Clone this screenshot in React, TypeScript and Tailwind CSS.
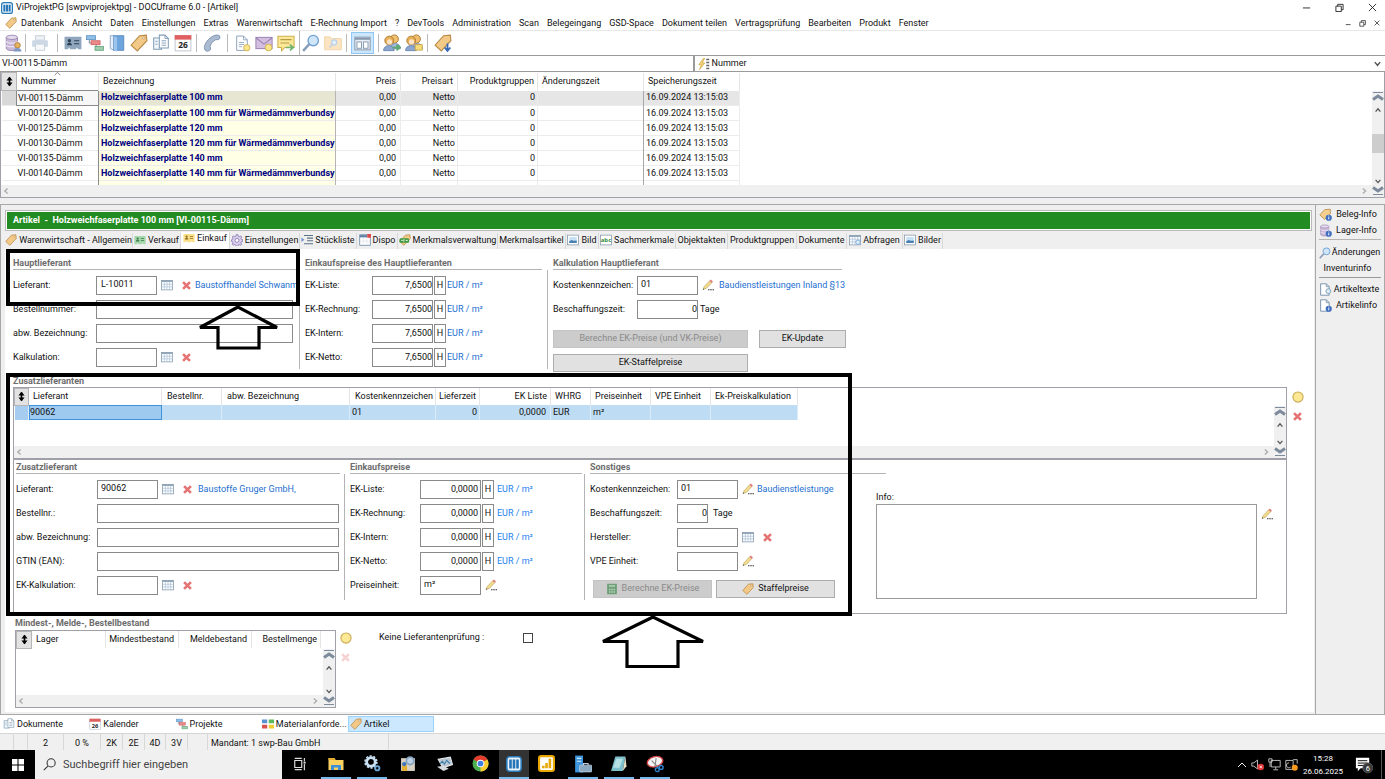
import React, { useId } from 'react';

type Kids = { children?: React.ReactNode };

/* ---------- Icons ---------- */

const Svg = ({ size = 16, box = 16, children }: Kids & { size?: number; box?: number }) => (
  <svg width={size} height={size} viewBox={`0 0 ${box} ${box}`} fill="none" className="shrink-0" aria-hidden="true">
    {children}
  </svg>
);

const tagShape = 'M8.5 1.5 14.5 1 15 6 6.5 15 1 10z';

const TagIcon = ({ size = 16 }: { size?: number }) => (
  <Svg size={size}>
    <path d={tagShape} fill="#f3c988" stroke="#b98a45" />
    <circle cx="12.3" cy="3.6" r="1.1" fill="#fff" stroke="#b98a45" strokeWidth=".6" />
  </Svg>
);

const TagDownIcon = ({ size = 16 }: { size?: number }) => (
  <Svg size={size}>
    <path d={tagShape} fill="#f3c988" stroke="#b98a45" />
    <path d="M12 8.5v6m-2.5-2.5 2.5 3 2.5-3" stroke="#3567b5" strokeWidth="1.6" />
  </Svg>
);

const TagAbcIcon = ({ size = 16 }: { size?: number }) => (
  <Svg size={size}>
    <path d={tagShape} fill="#f3c988" stroke="#b98a45" />
    <rect x=".5" y="5.5" width="13" height="6" rx="2" fill="#3e9a3e" />
    <path d="M3 8.5h2M6.5 7v3M9 8.5h2.500" stroke="#fff" strokeWidth="1.3" />
  </Svg>
);

const InfoDot = () => (
  <>
    <circle cx="12" cy="12" r="3.8" fill="#3f6fc0" />
    <path d="M12 11.3v2.600M12 9.300v1.100" stroke="#fff" strokeWidth="1.2" />
  </>
);

const TagInfoIcon = () => (
  <Svg size={13}>
    <path d="M7 2 14 1.500V7L7 14 1 8.500z" fill="#f4cf8d" stroke="#b98a45" />
    <InfoDot />
  </Svg>
);

const DbShape = () => (
  <>
    <path d="M2 3v9.500c0 3 10 3 10 0V3z" fill="#c9b8d8" stroke="#9a86b2" strokeWidth=".8" />
    <ellipse cx="7" cy="3" rx="5" ry="1.900" fill="#e4daee" stroke="#9a86b2" strokeWidth=".8" />
    <path d="M2 6.500c0 2.200 10 2.200 10 0M2 9.700c0 2.200 10 2.200 10 0" stroke="#f1e9f7" />
  </>
);

const DbInfoIcon = () => (
  <Svg size={13}>
    <DbShape />
    <InfoDot />
  </Svg>
);

const DbUserIcon = () => (
  <Svg size={18}>
    <DbShape />
    <circle cx="12" cy="10" r="2.500" fill="#e6b45c" stroke="#9b6a2d" strokeWidth=".6" />
    <path d="M8.500 15.500c0-4 7-4 7 0z" fill="#7f98c4" />
  </Svg>
);

const PrinterIcon = () => (
  <Svg size={18}>
    <rect x="4" y="1.500" width="8" height="4" fill="#eef1f5" stroke="#ccd5e0" />
    <rect x="1" y="5.500" width="14" height="6" rx="1" fill="#ccd8e6" />
    <rect x="4" y="9" width="8" height="5.500" fill="#f6f8fa" stroke="#ccd5e0" />
  </Svg>
);

const CardIcon = ({ size = 18, fill = '#8fa6bd', ink = '#2d4156' }: { size?: number; fill?: string; ink?: string }) => (
  <Svg size={size}>
    <path d="M.5 2.500h15v11h-3l-1-1.500-1 1.500h-5l-1-1.500-1 1.500h-3z" fill={fill} />
    <circle cx="4.800" cy="6" r="1.500" fill={ink} />
    <path d="M2.500 10c0-3 4.600-3 4.600 0z" fill={ink} />
    <path d="M9 6h4.500M9 8.700h4.500" stroke={ink} />
  </Svg>
);

const GanttIcon = ({ size = 18 }: { size?: number }) => (
  <Svg size={size}>
    <path d="M3 5v3h3M9 9v3.500h2" stroke="#8b97a5" />
    <rect x=".5" y="1.500" width="8" height="3.500" fill="#8fc0e8" stroke="#5b8fbd" strokeWidth=".7" />
    <rect x="4.500" y="6" width="8" height="3.500" fill="#ea8a8a" stroke="#cc5a5a" strokeWidth=".7" />
    <rect x="8" y="11" width="7.500" height="3.500" fill="#9fcfae" stroke="#5f9f78" strokeWidth=".7" />
  </Svg>
);

const BookIcon = () => (
  <Svg size={18}>
    <path d="M2 1.500h3.500v13L2 13z" fill="#e5edf6" stroke="#6c8db5" strokeWidth=".6" />
    <path d="M5 1.500h9v13H5z" fill="#6fa5dd" stroke="#4d80b8" strokeWidth=".7" />
    <path d="M5 1.500 8 3v12.500l-3-1z" fill="#9cc4ec" />
  </Svg>
);

const DocsIcon = ({ size = 18 }: { size?: number }) => (
  <Svg size={size}>
    <path d="M1.500 3.500h7v10h-7z" fill="#f2f7fb" stroke="#7f9bb5" strokeWidth=".9" />
    <path d="M6.500 1h5L14.500 4v8.500h-8z" fill="#fff" stroke="#7f9bb5" strokeWidth=".9" />
    <path d="M11.500 1v3h3M8.500 6h4M8.500 8h4M8.500 10h4M3 6.500h2M3 9h2" stroke="#7f9bb5" strokeWidth=".8" />
  </Svg>
);

const CalendarIcon = ({ size = 18 }: { size?: number }) => (
  <Svg size={size}>
    <rect x="1" y="1.500" width="14" height="13.500" fill="#fff" stroke="#b9c2cc" strokeWidth=".8" />
    <rect x=".6" y="1" width="14.800" height="4" fill="#e06060" />
    <text x="8" y="12.800" textAnchor="middle" fontSize="7.500" fontWeight="700" fill="#222" fontFamily="Open Sans, sans-serif">
      26
    </text>
  </Svg>
);

const PhoneIcon = () => (
  <Svg size={18}>
    <path
      d="M10.500 1.200c1-.6 3.800-.3 4.500.8.300 1-.2 2.600-1 2.900l-2.800.2C9 6.200 6.800 8.800 6.300 11l.5 2.600c-.4 1.200-2.600 1.900-3.900 1.600C1.500 14.500 1 12.500 1.300 10.800 2.500 6.500 6.500 2.500 10.500 1.200z"
      fill="#a9bad1"
      stroke="#7088a8"
      strokeWidth=".7"
    />
  </Svg>
);

const YellowDot = () => <circle cx="12" cy="12" r="3" fill="#fbe58b" stroke="#cfae4b" strokeWidth=".8" />;

const DocNewIcon = () => (
  <Svg size={17}>
    <path d="M2.500 1H9l3.500 3.500V14.500h-10z" fill="#fff" stroke="#8aa1b8" strokeWidth=".9" />
    <path d="M9 1v3.500h3.500M4.500 7h5M4.500 9h5M4.500 11h3" stroke="#8aa1b8" strokeWidth=".8" />
    <YellowDot />
  </Svg>
);

const MailIcon = () => (
  <Svg size={18}>
    <rect x=".8" y="3" width="14.400" height="10" fill="#d3bfe0" stroke="#9c83b3" strokeWidth=".9" />
    <path d="m1 3.500 7 5.500 7-5.500" stroke="#9c83b3" />
    <YellowDot />
  </Svg>
);

const NoteIcon = () => (
  <Svg size={18}>
    <path d="M.8 2h14.400v10H7l-3 3v-3H.8z" fill="#fbe898" stroke="#cdb04e" strokeWidth=".9" />
    <path d="M3 5h10M3 8h8" stroke="#b69b44" />
    <path d="M8 12h6m-2.500-2.500L14.500 12l-3 2.500" stroke="#6fb36f" strokeWidth="1.500" />
  </Svg>
);

const SearchIcon = ({ size = 18 }: { size?: number }) => (
  <Svg size={size}>
    <path d="M1 15 6.500 9" stroke="#8b9cb8" strokeWidth="2.200" />
    <circle cx="10" cy="5.800" r="4.600" fill="#cfe6fa" stroke="#6f9fd0" strokeWidth="1.200" />
  </Svg>
);

const FolderIcon = () => (
  <Svg size={18}>
    <path d="M.5 2.500h5l1 1.500h9v10H.5z" fill="#fae4c2" stroke="#f0d3a5" strokeWidth=".7" />
    <path d="m5 12 2.500-3" stroke="#c8d0dd" strokeWidth="1.400" />
    <circle cx="9" cy="7.500" r="2.300" fill="#e3effa" stroke="#b9d0e8" />
  </Svg>
);

const LayoutIcon = () => (
  <Svg size={17}>
    <rect x=".8" y="2" width="14.400" height="12" fill="#e9eff5" stroke="#8699ae" strokeWidth=".9" />
    <path d="M1 3.500h14" stroke="#8699ae" strokeWidth="2" />
    <rect x="2.800" y="6.500" width="4.200" height="6" fill="#fff" stroke="#8699ae" strokeWidth=".9" />
    <rect x="9" y="6.500" width="4.200" height="6" fill="#fff" stroke="#8699ae" strokeWidth=".9" />
  </Svg>
);

const PeopleIcon = ({ folder = false }: { folder?: boolean }) => (
  <Svg size={18}>
    <circle cx="10" cy="4.500" r="3.700" fill="#f0c070" stroke="#a9762f" strokeWidth=".8" />
    <path d="M6.500 13c0-6 9-6 9 0z" fill="#a5bbde" stroke="#6580ab" strokeWidth=".6" />
    <circle cx="5.500" cy="5.800" r="3.900" fill="#e8b158" stroke="#a9762f" strokeWidth=".8" />
    <circle cx="5.800" cy="7" r="2.300" fill="#fbe3c4" />
    <path d="M.5 14.800c0-6 9.500-6 9.500 0z" fill="#8ba6cf" stroke="#6580ab" strokeWidth=".7" />
    {folder ? (
      <rect x="9" y="9.500" width="6.300" height="4.800" fill="#f7dc7c" stroke="#c49d3b" strokeWidth=".7" />
    ) : (
      <path d="M8.500 12h6M12 9.500l3 2.500-3 2.500" stroke="#5fa873" strokeWidth="1.600" />
    )}
  </Svg>
);

const GearIcon = ({ size = 12 }: { size?: number }) => (
  <Svg size={size}>
    <path
      d="M7 .8h2l.5 2 1.500.7 1.900-1 1.400 1.500-1 1.800.6 1.500 2 .5v2l-2 .5-.7 1.500 1 1.900-1.400 1.300-1.800-1-1.500.7-.5 2H7l-.5-2-1.500-.7-1.900 1-1.400-1.400 1-1.800-.7-1.500-1.500-.5v-2l1.500-.5.7-1.500-1-1.800 1.400-1.500 1.900 1 1.500-.7z"
      fill="#d8cdea"
      stroke="#806db0"
    />
    <circle cx="8" cy="8.500" r="2.600" fill="#fff" stroke="#806db0" />
  </Svg>
);

const ListIcon = () => (
  <Svg size={12}>
    <path d="M4 2h12M8 5.500h8M8 9h8M4 13h12" stroke="#5d7288" strokeWidth="1.400" />
    <path d="M.5 4.500 4.500 7.500l-4 3z" fill="#7390c8" />
  </Svg>
);

const DispoIcon = () => (
  <Svg size={12}>
    <rect x="1" y="1" width="14" height="14" fill="#fff" stroke="#5e7fa3" />
    <path d="M1 3h10" stroke="#5e7fa3" strokeWidth="3" />
    <rect x="11" y="0" width="5" height="5" fill="#e24848" />
    <path d="M5.500 5v9M10.500 5v9M2 9.500h12" stroke="#dfe6ee" />
  </Svg>
);

const PictureIcon = () => (
  <Svg size={12}>
    <rect x=".7" y="1.500" width="14.600" height="13" fill="#fff" stroke="#8496a8" />
    <rect x="3" y="4" width="10" height="8" fill="#c6e1f6" />
    <path d="M3 12V9.500l3-1.500 3 1 4-.5V12z" fill="#4a7fb0" />
  </Svg>
);

const AbcIcon = () => (
  <Svg size={12}>
    <rect x=".7" y="1.500" width="14.600" height="13" fill="#fff" stroke="#8496a8" />
    <text x="8" y="11" textAnchor="middle" fontSize="8" fontWeight="700" fill="#2f8a3c" fontFamily="Open Sans, sans-serif">
      abc
    </text>
  </Svg>
);

const GridIcon = ({ search = false }: { search?: boolean }) => (
  <Svg size={12}>
    <rect x=".7" y="2" width="14.600" height="12.500" fill="#fff" stroke="#7d95ab" />
    <path d="M1 3h14" stroke="#7d95ab" strokeWidth="1.500" />
    <path d="M1 7h14M1 10.500h14M4.500 4v10M8 4v10M11.500 4v10" stroke="#adc3d8" />
    {search && <circle cx="12" cy="11" r="3" fill="#dcecfa" stroke="#6f9fd0" />}
  </Svg>
);

const CrossIcon = ({ faded = false }: { faded?: boolean }) => (
  <Svg size={11}>
    <path d="m3 3 10 10M13 3 3 13" stroke={faded ? '#f6d2d2' : '#e57373'} strokeWidth="3.800" />
  </Svg>
);

const PencilIcon = () => (
  <Svg size={12}>
    <path d="M1.500 13.500 3 10l7.500-8 2.800 2.600-7.600 8z" fill="#f3dc8c" stroke="#b39a54" strokeWidth=".8" />
    <path d="M10 2.500 11.800.8l2.800 2.500-1.800 1.900z" fill="#e07f7f" />
    <path d="m1 14.500.8-2 1.200 1.200z" fill="#333" />
    <path d="M8 14.200h8" stroke="#333" strokeWidth="1.400" strokeDasharray="2 1" />
  </Svg>
);

const CircleIcon = () => (
  <Svg size={12}>
    <circle cx="8" cy="8" r="6.800" fill="#fde995" stroke="#c8a850" strokeWidth="1.400" />
  </Svg>
);

const DocSideIcon = ({ info = false }: { info?: boolean }) => (
  <Svg size={13}>
    <path d="M2 1h7l3.500 3.500V15H2z" fill="#fff" stroke="#7893ad" strokeWidth="1.200" />
    <path d="M9 1v3.500h3.500" stroke="#7893ad" />
    {info ? <InfoDot /> : <circle cx="11.500" cy="10" r="3" fill="#d9ecf7" stroke="#7893ad" />}
  </Svg>
);

const CalcIcon = () => (
  <Svg size={12}>
    <rect x="1.500" y="1" width="13" height="14" fill="#6f9f78" />
    <path d="M4 4h8" stroke="#b9d2bd" strokeWidth="2" />
    <path d="M4 8.500h8M4 12h8" stroke="#b9d2bd" strokeWidth="2" strokeDasharray="2 1" />
  </Svg>
);

const BlocksIcon = () => (
  <Svg size={12}>
    <rect x="0" y="2" width="7" height="5" fill="#5a8fd0" />
    <rect x="9" y="2" width="7" height="5" fill="#5cb85c" />
    <rect x="0" y="9" width="7" height="5" fill="#d85050" />
    <rect x="9" y="9" width="7" height="5" fill="#f0d030" />
  </Svg>
);

const BoltIcon = () => (
  <Svg size={12}>
    <path d="M7 .5 1 9h3.500L2 15.500 9 6.500H5.500L9 .5z" fill="#f7d774" stroke="#c09a35" strokeWidth=".8" />
    <path d="M11 2h4M11 6h4M11 10h4M11 14h4" stroke="#666" strokeWidth="2" />
  </Svg>
);

const AppIcon = ({ size = 12 }: { size?: number }) => (
  <Svg size={size}>
    <rect x=".8" y=".8" width="14.400" height="14.400" rx="3" fill="#e8f3fb" stroke="#2a7ab8" strokeWidth="1.600" />
    <path d="M4.500 3.500v9M8 3.500v9M11.500 3.500v9" stroke="#2474b5" strokeWidth="2.600" />
  </Svg>
);

const UpDownIcon = () => (
  <Svg size={11}>
    <path d="M8 2v12" stroke="#000" strokeWidth="2.400" />
    <path d="M3.500 6.500h9L8 1zM3.500 9.500h9L8 15z" fill="#000" />
  </Svg>
);

const Chevron = ({ d, color = '#555', size = 8 }: { d: 'up' | 'down' | 'left' | 'right'; color?: string; size?: number }) => {
  const paths = { up: 'M2 7l3-3.500L8 7', down: 'M2 3.500 5 7l3-3.500', left: 'M7 2 3.500 5 7 8', right: 'M3.500 2 7 5 3.500 8' };
  return (
    <Svg size={size} box={10}>
      <path d={paths[d]} stroke={color} strokeWidth="1.600" />
    </Svg>
  );
};

const JumpIcon = ({ down = false }: { down?: boolean }) => (
  <svg width="12" height="11" viewBox="0 0 12 11" fill="none" className="shrink-0" aria-hidden="true">
    <g transform={down ? 'rotate(180 6 5.500)' : undefined}>
      <path d="M1 1.500h10" stroke="#7d8b9c" />
      <path d="M1 8.500 6 5l5 3.500" stroke="#7d8b9c" strokeWidth="3" />
    </g>
  </svg>
);

/* ---------- Shared pieces ---------- */

const VScroll = ({ thumb = false }: { thumb?: boolean }) => (
  <div className="flex w-3 flex-1 flex-col items-center bg-[#f0f0f0]">
    <JumpIcon />
    <div className="h-1" />
    <Chevron d="up" />
    {thumb && <div className="mt-5 h-[19px] w-full bg-[#cdcdcd]" />}
    <div className="flex-1" />
    <Chevron d="down" />
  </div>
);

const HScroll = () => (
  <div className="flex h-3 items-center bg-[#f0f0f0] pl-px">
    <Chevron d="left" color="#aaa" />
    <div className="flex-1" />
    <Chevron d="right" color="#aaa" />
    <div className="ml-1 flex w-3 justify-center">
      <JumpIcon down />
    </div>
  </div>
);

const HandleCell = () => (
  <th className="border border-[#b5b5b5] bg-[#e3e3e3] p-0">
    <div className="flex justify-center">
      <UpDownIcon />
    </div>
  </th>
);

const Section = ({ title, className, children }: Kids & { title: string; className: string }) => (
  <section className={`shrink-0 ${className}`}>
    <h2 className="h-3 border-b border-[#b4b4b4] font-bold text-[#6d6d6d]">{title}</h2>
    <div className="flex flex-col gap-[5px] pt-1.5">{children}</div>
  </section>
);

const Divider = ({ className = '' }: { className?: string }) => (
  <div className={`ml-0.5 mr-[5px] mt-3 w-px shrink-0 bg-[#b4b4b4] ${className}`} />
);

type FieldProps = Kids & {
  label: string;
  labelClass?: string;
  inputClass?: string;
  value?: string;
};

const Field = ({ label, labelClass = 'w-[83px]', inputClass = 'w-[61px]', value = '', children }: FieldProps) => {
  const id = useId();
  return (
    <div className="flex h-[19px] items-center">
      <label htmlFor={id} className={`shrink-0 ${labelClass}`}>
        {label}
      </label>
      <input
        id={id}
        defaultValue={value}
        className={`h-[19px] shrink-0 border border-[#8a8a8a] bg-white outline-none ${inputClass}`}
      />
      {children}
    </div>
  );
};

const PriceField = ({ label, value, labelClass, inputClass, unitClass }: {
  label: string;
  value: string;
  labelClass: string;
  inputClass: string;
  unitClass: string;
}) => (
  <Field label={label} labelClass={labelClass} inputClass={inputClass} value={value}>
    <button className="ml-px h-[19px] w-3 shrink-0 border border-[#8a8a8a] bg-white">H</button>
    <span className={unitClass}>EUR / m²</span>
  </Field>
);

const LookupIcons = () => (
  <>
    <button className="ml-1" aria-label="Auswählen">
      <GridIcon />
    </button>
    <button className="ml-2" aria-label="Entfernen">
      <CrossIcon />
    </button>
  </>
);

const EditButton = () => (
  <button className="ml-1" aria-label="Bearbeiten">
    <PencilIcon />
  </button>
);

const FormButton = ({ children, className, disabled = false }: Kids & { className: string; disabled?: boolean }) => (
  <button
    disabled={disabled}
    className={`flex h-[18px] items-center justify-center gap-1 border border-[#adadad] bg-[#e1e1e1] disabled:border-[#c4c4c4] disabled:bg-[#cccccc] disabled:text-[#8a8a8a] ${className}`}
  >
    {children}
  </button>
);

/* ---------- Window header ---------- */

const TitleBar = () => (
  <header className="flex h-[15px] items-center justify-between bg-white pl-px pr-2">
    <div className="flex items-center gap-[3px]">
      <AppIcon />
      <h1>ViProjektPG [swpviprojektpg] - DOCUframe 6.0 - [Artikel]</h1>
    </div>
    <div className="flex items-center gap-6">
      {['M1 5.500h8', 'M1 3.500h6v6H1zM3 3.500v-2h6v6H7', 'm1 1 8 8m0-8-8 8'].map((d) => (
        <button key={d} aria-label="Fenster">
          <Svg size={9} box={10}>
            <path d={d} stroke="#222" />
          </Svg>
        </button>
      ))}
    </div>
  </header>
);

const menuItems = [
  'Datenbank', 'Ansicht', 'Daten', 'Einstellungen', 'Extras', 'Warenwirtschaft', 'E-Rechnung Import', '?', 'DevTools',
  'Administration', 'Scan', 'Belegeingang', 'GSD-Space', 'Dokument teilen', 'Vertragsprüfung', 'Bearbeiten', 'Produkt', 'Fenster',
];

const MenuBar = () => (
  <nav className="flex h-4 items-center border-b border-[#e8e8e8] bg-white pl-[5px] pt-px">
    <TagIcon size={12} />
    <div className="flex flex-1 gap-2 pl-1">
      {menuItems.map((item) => (
        <button key={item} className="whitespace-nowrap">
          {item}
        </button>
      ))}
    </div>
    <div className="flex items-center gap-1.5 pr-1">
      {['M1 7h6', 'M1 4h5v5H1zM3 4V2h5v5H6', 'm2 2 6 6m0-6-6 6'].map((d) => (
        <Svg key={d} size={8} box={10}>
          <path d={d} stroke="#555" strokeWidth="1.200" />
        </Svg>
      ))}
    </div>
  </nav>
);

const ToolSep = () => <div className="mx-1 h-[18px] w-px bg-[#b9b9b9]" />;

const ToolGroup = ({ children }: Kids) => <div className="flex items-center gap-1">{children}</div>;

const ToolBar = () => (
  <div className="flex h-6 items-center bg-white pl-1">
    <DbUserIcon />
    <div className="ml-[3px] mr-1 h-[18px] w-px bg-[#b9b9b9]" />
    <div className="pl-px pr-1">
      <PrinterIcon />
    </div>
    <ToolSep />
    <div className="ml-0.5 flex items-center gap-1">
      <CardIcon />
      <GanttIcon />
      <BookIcon />
      <TagIcon size={18} />
      <DocsIcon />
      <CalendarIcon />
    </div>
    <ToolSep />
    <div className="px-0.5">
      <PhoneIcon />
    </div>
    <ToolSep />
    <div className="ml-0.5">
      <ToolGroup>
        <DocNewIcon />
        <MailIcon />
        <NoteIcon />
      </ToolGroup>
    </div>
    <div className="ml-1 h-6 w-px bg-[#b9b9b9]" />
    <div className="ml-0.5">
      <ToolGroup>
        <SearchIcon />
        <FolderIcon />
      </ToolGroup>
    </div>
    <div className="mx-1 h-[18px] w-px bg-[#b9b9b9]" />
    <div className="flex h-[22px] w-[23px] items-center justify-center border border-[#8fc6f5] bg-[#cce6fb]">
      <LayoutIcon />
    </div>
    <ToolSep />
    <ToolGroup>
      <PeopleIcon />
      <PeopleIcon folder />
    </ToolGroup>
    <ToolSep />
    <div className="ml-0.5">
      <TagDownIcon size={18} />
    </div>
  </div>
);

const FilterBar = () => (
  <div className="flex h-[17px] border-b border-t border-[#9a9a9a] bg-white">
    <input aria-label="Suche" defaultValue="VI-00115-Dämm" className="w-1/2 bg-white px-0.5 outline-none" />
    <button className="flex flex-1 items-center gap-0.5 border-l-2 border-[#9a9a9a] px-[3px]">
      <BoltIcon />
      <span className="flex-1 text-left">Nummer</span>
      <Chevron d="down" size={9} />
    </button>
  </div>
);

const articles = [
  ['VI-00115-Dämm', 'Holzweichfaserplatte 100 mm'],
  ['VI-00120-Dämm', 'Holzweichfaserplatte 100 mm für Wärmedämmverbundsy'],
  ['VI-00125-Dämm', 'Holzweichfaserplatte 120 mm'],
  ['VI-00130-Dämm', 'Holzweichfaserplatte 120 mm für Wärmedämmverbundsy'],
  ['VI-00135-Dämm', 'Holzweichfaserplatte 140 mm'],
  ['VI-00140-Dämm', 'Holzweichfaserplatte 140 mm für Wärmedämmverbundsy'],
];

const ArticleGrid = () => (
  <div className="border-b border-l border-r border-[#a0a0a8] bg-white">
    <div className="flex">
      <div className="min-w-0 flex-1">
        <table className="w-[738px] table-fixed border-collapse text-left">
          <colgroup>
            <col className="w-[15px]" />
            <col className="w-[82px]" />
            <col className="w-[237px]" />
            <col className="w-[65px]" />
            <col className="w-[57px]" />
            <col className="w-[80px]" />
            <col className="w-[106px]" />
            <col className="w-[96px]" />
          </colgroup>
          <thead>
            <tr className="h-[18px] [&>th]:font-normal">
              <HandleCell />
              <th className="relative border-r border-[#e5e5e5] pl-1">
                Nummer
                <span className="absolute -top-0.5 left-[37px]">
                  <Svg size={7} box={10}>
                    <path d="m1 6 4-4 4 4" stroke="#555" />
                  </Svg>
                </span>
              </th>
              <th className="border-r border-[#e5e5e5] pl-1">Bezeichnung</th>
              <th className="border-r border-[#e5e5e5] pr-1 text-right">Preis</th>
              <th className="border-r border-[#e5e5e5] pr-1 text-right">Preisart</th>
              <th className="border-r border-[#e5e5e5] pr-[3px] text-right">Produktgruppen</th>
              <th className="border-r border-[#e5e5e5] pl-1">Änderungszeit</th>
              <th className="border-r border-[#e5e5e5] pl-1">Speicherungszeit</th>
            </tr>
          </thead>
          <tbody>
            {articles.map(([nr, name], i) => (
              <tr key={nr} className={`h-[15px] border-b border-[#ececec] ${i === 0 ? 'bg-[#e6e6e6]' : 'bg-white'}`}>
                <td className={i === 0 ? 'bg-[#d8d8d8]' : ''} />
                <td className={`border-r border-[#8a8a8a] pl-px ${i === 0 ? 'border-t border-b border-l bg-[#f7f7f7]' : ''}`}>{nr}</td>
                <td
                  className={`whitespace-nowrap border-r border-[#b5b5b5] pl-0.5 font-bold text-[#000080] ${
                    i === 0 ? 'bg-[#e6e6d2]' : 'bg-[#ffffe6]'
                  }`}
                >
                  {name}
                </td>
                <td className="border-r border-[#ececec] pr-1 text-right">0,00</td>
                <td className="border-r border-[#ececec] pr-0.5 text-right">Netto</td>
                <td className="border-r border-[#ececec] pr-0.5 text-right">0</td>
                <td className="border-r border-[#a8a8a8]" />
                <td className="border-r border-[#ececec] pl-0.5">16.09.2024 13:15:03</td>
              </tr>
            ))}
            <tr className="h-1">
              <td />
              <td className="border-r border-[#8a8a8a]" />
              <td className="border-r border-[#b5b5b5] bg-[#ffffe6]" />
              <td className="border-r border-[#ececec]" />
              <td className="border-r border-[#ececec]" />
              <td className="border-r border-[#ececec]" />
              <td className="border-r border-[#a8a8a8]" />
              <td className="border-r border-[#ececec]" />
            </tr>
          </tbody>
        </table>
      </div>
      <div className="flex w-3 flex-col pt-[19px]">
        <VScroll thumb />
      </div>
    </div>
    <HScroll />
  </div>
);

/* ---------- Detail form ---------- */

const tabs = [
  { name: 'Warenwirtschaft - Allgemein', icon: <TagIcon size={12} />, width: 'w-[128px]' },
  { name: 'Verkauf', icon: <CardIcon size={12} fill="#a5d6ac" ink="#3c7a48" />, width: 'w-[48px]' },
  { name: 'Einkauf', icon: <CardIcon size={12} fill="#fbe08a" ink="#8a6a20" />, width: 'w-[49px]', active: true },
  { name: 'Einstellungen', icon: <GearIcon />, width: 'w-[70px]' },
  { name: 'Stückliste', icon: <ListIcon />, width: 'w-[57px]' },
  { name: 'Dispo', icon: <DispoIcon />, width: 'w-[41px]' },
  { name: 'Merkmalsverwaltung', icon: <TagAbcIcon size={12} />, width: 'w-[100px]' },
  { name: 'Merkmalsartikel', width: 'w-[68px]' },
  { name: 'Bild', icon: <PictureIcon />, width: 'w-[33px]' },
  { name: 'Sachmerkmale', icon: <AbcIcon />, width: 'w-[77px]' },
  { name: 'Objektakten', width: 'w-[52px]' },
  { name: 'Produktgruppen', width: 'w-[69px]' },
  { name: 'Dokumente', width: 'w-[50px]' },
  { name: 'Abfragen', icon: <GridIcon search />, width: 'w-[56px]' },
  { name: 'Bilder', icon: <PictureIcon />, width: 'w-[40px]' },
];

const Tabs = () => (
  <div role="tablist" className="flex h-[17px] items-end">
    {tabs.map((t) => (
      <button
        key={t.name}
        role="tab"
        aria-selected={!!t.active}
        className={`flex shrink-0 items-center justify-center gap-0.5 whitespace-nowrap border-r border-[#d9d9d9] ${t.width} ${
          t.active ? 'h-[17px] bg-white pb-1' : 'h-4 pb-px'
        }`}
      >
        {t.icon}
        {t.name}
      </button>
    ))}
  </div>
);

const MainSupplier = () => (
  <div className="flex h-[115px] pl-2">
    <Section title="Hauptlieferant" className="w-[284px]">
      <Field label="Lieferant:" value="L-10011" inputClass="w-[61px] pl-1 pb-0.5">
        <LookupIcons />
        <a href="#lieferant" className="ml-[3px] whitespace-nowrap text-[#1e6fd0]">
          Baustoffhandel Schwanm
        </a>
      </Field>
      <Field label="Bestellnummer:" inputClass="w-[197px]" />
      <Field label="abw. Bezeichnung:" inputClass="w-[197px]" />
      <Field label="Kalkulation:">
        <LookupIcons />
      </Field>
    </Section>
    <Divider className="mb-1" />
    <Section title="Einkaufspreise des Hauptlieferanten" className="w-[237px]">
      {['EK-Liste:', 'EK-Rechnung:', 'EK-Intern:', 'EK-Netto:'].map((l) => (
        <PriceField
          key={l}
          label={l}
          value="7,6500"
          labelClass="w-[67px]"
          inputClass="w-[61px] text-right"
          unitClass="pl-px text-[#1e6fd0]"
        />
      ))}
    </Section>
    <div className="w-[3px]" />
    <Divider className="mb-1" />
    <Section title="Kalkulation Hauptlieferant" className="w-[289px]">
      <Field label="Kostenkennzeichen:" labelClass="w-[84px]" value="01" inputClass="w-[61px] pl-[3px] pb-0.5">
        <EditButton />
        <a href="#kosten" className="ml-[5px] whitespace-nowrap text-[#1e6fd0]">
          Baudienstleistungen Inland §13
        </a>
      </Field>
      <Field label="Beschaffungszeit:" labelClass="w-[84px]" value="0" inputClass="w-[61px] text-right">
        <span className="pl-0.5">Tage</span>
      </Field>
      <div className="flex w-[293px] flex-col gap-1.5 pt-1.5">
        <div className="flex justify-between">
          <FormButton disabled className="w-[195px]">
            Berechne EK-Preise (und VK-Preise)
          </FormButton>
          <FormButton className="w-[87px]">EK-Update</FormButton>
        </div>
        <FormButton className="w-[195px]">EK-Staffelpreise</FormButton>
      </div>
    </Section>
  </div>
);

const SupplierGrid = () => (
  <div className="flex">
    <div className="ml-2 min-w-0 flex-1 border border-[#a0a0a8]">
      <div className="flex h-[58px]">
        <div className="min-w-0 flex-1">
          <table className="w-[783px] table-fixed border-collapse text-left">
            <colgroup>
              <col className="w-[14px]" />
              <col className="w-[133px]" />
              <col className="w-[60px]" />
              <col className="w-[128px]" />
              <col className="w-[86px]" />
              <col className="w-[44px]" />
              <col className="w-[71px]" />
              <col className="w-[40px]" />
              <col className="w-[60px]" />
              <col className="w-[60px]" />
              <col className="w-[87px]" />
            </colgroup>
            <thead>
              <tr className="h-[17px] [&>th]:whitespace-nowrap [&>th]:font-normal [&>th+th]:border-r [&>th+th]:border-[#e5e5e5]">
                <HandleCell />
                <th className="pl-1">Lieferant</th>
                <th className="pl-[5px]">Bestellnr.</th>
                <th className="pl-[5px]">abw. Bezeichnung</th>
                <th className="pl-[5px]">Kostenkennzeichen</th>
                <th className="pr-[3px] text-right">Lieferzeit</th>
                <th className="pr-[3px] text-right">EK Liste</th>
                <th className="pl-1">WHRG</th>
                <th className="pl-1">Preiseinheit</th>
                <th className="pl-1">VPE Einheit</th>
                <th className="pl-1">Ek-Preiskalkulation</th>
              </tr>
            </thead>
            <tbody>
              <tr className="h-[15px] bg-[#bfdcf5] [&>td]:border-r [&>td]:border-[#dcebf8]">
                <td className="bg-[#a6cdf0]" />
                <td className="bg-[#9fcaf0] pl-px outline outline-1 -outline-offset-1 outline-[#3f92dc]">90062</td>
                <td />
                <td />
                <td className="pl-0.5">01</td>
                <td className="pr-0.5 text-right">0</td>
                <td className="pr-1 text-right">0,0000</td>
                <td className="pl-0.5">EUR</td>
                <td className="pl-0.5">m²</td>
                <td />
                <td />
              </tr>
            </tbody>
          </table>
        </div>
        <div className="flex w-3 flex-col pt-[18px]">
          <VScroll />
        </div>
      </div>
      <HScroll />
    </div>
    <div className="flex w-[27px] flex-col gap-2 pl-[5px] pt-1">
      <button aria-label="Neu">
        <CircleIcon />
      </button>
      <button aria-label="Löschen">
        <CrossIcon />
      </button>
    </div>
  </div>
);

const ExtraSupplier = () => (
  <div className="ml-2 mr-[27px] flex h-[155px] border border-[#a0a0a8] pl-0.5 pt-0.5">
    <Section title="Zusatzlieferant" className="w-[324px]">
      <Field label="Lieferant:" labelClass="w-[81px]" value="90062" inputClass="w-[61px] pl-[3px] pb-0.5">
        <LookupIcons />
        <a href="#zusatzlieferant" className="ml-[5px] whitespace-nowrap text-[#1e6fd0]">
          Baustoffe Gruger GmbH,
        </a>
      </Field>
      <Field label="Bestellnr.:" labelClass="w-[81px]" inputClass="w-[242px]" />
      <Field label="abw. Bezeichnung:" labelClass="w-[81px]" inputClass="w-[242px]" />
      <Field label="GTIN (EAN):" labelClass="w-[81px]" inputClass="w-[242px]" />
      <Field label="EK-Kalkulation:" labelClass="w-[81px]">
        <LookupIcons />
      </Field>
    </Section>
    <div className="w-0.5" />
    <Divider className="mb-[13px]" />
    <Section title="Einkaufspreise" className="w-[232px]">
      {['EK-Liste:', 'EK-Rechnung:', 'EK-Intern:', 'EK-Netto:'].map((l) => (
        <PriceField
          key={l}
          label={l}
          value="0,0000"
          labelClass="w-[70px]"
          inputClass="w-[61px] pr-0.5 text-right"
          unitClass="pl-[3px] text-[#1e80f0]"
        />
      ))}
      <Field label="Preiseinheit:" labelClass="w-[70px]" value="m²" inputClass="w-[61px] pl-[3px] pb-0.5">
        <EditButton />
      </Field>
    </Section>
    <Divider className="mb-[13px]" />
    <Section title="Sonstiges" className="-mr-2.5 w-[296px]">
      <Field label="Kostenkennzeichen:" labelClass="w-[87px]" value="01" inputClass="w-[61px] pl-[3px] pb-0.5">
        <EditButton />
        <a href="#kosten2" className="ml-[3px] whitespace-nowrap text-[#1e6fd0]">
          Baudienstleistunge
        </a>
      </Field>
      <Field label="Beschaffungszeit:" labelClass="w-[87px]" value="0" inputClass="w-[31px] text-right">
        <span className="pl-[5px]">Tage</span>
      </Field>
      <Field label="Hersteller:" labelClass="w-[87px]">
        <LookupIcons />
      </Field>
      <Field label="VPE Einheit:" labelClass="w-[87px]">
        <EditButton />
      </Field>
      <div className="flex gap-1 pl-[3px] pt-1">
        <FormButton disabled className="w-[119px]">
          <CalcIcon />
          Berechne EK-Preise
        </FormButton>
        <FormButton className="w-[119px]">
          <TagIcon size={12} />
          Staffelpreise
        </FormButton>
      </div>
    </Section>
    <div className="flex min-w-0 flex-1 items-start pt-[30px]">
      <div className="flex min-w-0 flex-1 flex-col">
        <label htmlFor="info" className="h-3">
          Info:
        </label>
        <textarea id="info" className="h-[95px] w-full resize-none border border-[#9a9a9a] bg-white outline-none" />
      </div>
      <div className="mr-[13px] pt-4">
        <EditButton />
      </div>
    </div>
  </div>
);

const StockLevels = () => (
  <div className="flex pl-[10px] pt-1">
    <div>
      <h2 className="h-3 font-bold text-[#6d6d6d]">Mindest-, Melde-, Bestellbestand</h2>
      <div className="w-[321px] border border-[#a0a0a8]">
        <div className="flex h-[64px]">
          <div className="min-w-0 flex-1">
            <table className="w-[304px] table-fixed border-collapse">
              <colgroup>
                <col className="w-[15px]" />
                <col className="w-[74px]" />
                <col className="w-[73px]" />
                <col className="w-[73px]" />
                <col className="w-[69px]" />
              </colgroup>
              <thead>
                <tr className="h-[17px] [&>th]:font-normal [&>th+th]:border-r [&>th+th]:border-[#e5e5e5]">
                  <HandleCell />
                  <th className="pl-1 text-left">Lager</th>
                  <th className="pr-1 text-right">Mindestbestand</th>
                  <th className="pr-1 text-right">Meldebestand</th>
                  <th className="pr-[3px] text-right">Bestellmenge</th>
                </tr>
              </thead>
            </table>
          </div>
          <div className="flex w-3 flex-col pt-[18px]">
            <VScroll />
          </div>
        </div>
        <HScroll />
      </div>
    </div>
    <div className="flex flex-col gap-2 pl-1 pt-3.5">
      <button aria-label="Neu">
        <CircleIcon />
      </button>
      <button aria-label="Löschen" disabled>
        <CrossIcon faded />
      </button>
    </div>
    <div className="mt-3.5 flex h-3 items-center pl-[27px]">
      <label htmlFor="pruefung" className="w-[144px]">
        Keine Lieferantenprüfung :
      </label>
      <input id="pruefung" type="checkbox" className="size-[10px] appearance-none border border-[#444] bg-white" />
    </div>
  </div>
);

/* Marker frames and arrows drawn over the form */
const Markers = () => (
  <div className="pointer-events-none absolute inset-0">
    <div className="absolute left-px top-0 h-[57px] w-[294px] border-4 border-black" />
    <div className="absolute left-px top-[124px] h-[243px] w-[846px] border-4 border-black" />
    <svg className="absolute left-[190px] top-[55px]" width="86" height="47" viewBox="0 0 86 47" fill="none" aria-hidden="true">
      <path d="M43 3 5 23.500h18V44h41V23.500h18z" stroke="#000" strokeWidth="3.200" />
    </svg>
    <svg className="absolute left-[593px] top-[365px]" width="110" height="56" viewBox="0 0 110 56" fill="none" aria-hidden="true">
      <path d="M55 3 5 27.500h24V52.500h51V27.500h25z" stroke="#000" strokeWidth="3.200" />
    </svg>
  </div>
);

const sideItem = 'flex h-4 w-full items-center';

const SideBar = () => (
  <aside className="flex w-[70px] shrink-0 flex-col border-l border-r border-[#a8a8a8] bg-[#efefef] px-[3px] pt-0.5">
    <button className={sideItem}>
      <TagInfoIcon />
      <span className="flex-1">Beleg-Info</span>
    </button>
    <button className={sideItem}>
      <DbInfoIcon />
      <span className="flex-1">Lager-Info</span>
    </button>
    <hr className="mb-[5px] border-[#b4b4b4]" />
    <button className={sideItem}>
      <SearchIcon size={12} />
      <span className="flex-1">Änderungen</span>
    </button>
    <button className={sideItem}>
      <span className="w-[57px]">Inventurinfo</span>
    </button>
    <hr className="mb-1 border-[#999]" />
    <button className={sideItem}>
      <DocSideIcon />
      <span className="flex-1">Artikeltexte</span>
    </button>
    <button className={sideItem}>
      <DocSideIcon info />
      <span className="flex-1">Artikelinfo</span>
    </button>
  </aside>
);

/* ---------- Footer ---------- */

const windows = [
  { name: 'Dokumente', icon: <DocsIcon size={12} /> },
  { name: 'Kalender', icon: <CalendarIcon size={12} /> },
  { name: 'Projekte', icon: <GanttIcon size={12} /> },
  { name: 'Materialanforde...', icon: <BlocksIcon /> },
  { name: 'Artikel', icon: <TagIcon size={12} />, active: true },
];

const WindowTabs = () => (
  <div className="bg-white py-px pl-px">
    <div className="flex w-[433px]">
      {windows.map((w) => (
        <button
          key={w.name}
          className={`flex h-4 flex-1 basis-0 items-center gap-0.5 border pl-px ${
            w.active ? 'border-[#99d1ff] bg-[#cce8ff]' : 'border-transparent'
          }`}
        >
          {w.icon}
          <span className="whitespace-nowrap">{w.name}</span>
        </button>
      ))}
    </div>
  </div>
);

const statusCells = [
  ['', 'w-[14px]'], ['', 'w-[14px]'], ['2', 'w-[36px]'], ['0 %', 'w-[37px]'], ['2K', 'w-[22px]'], ['2E', 'w-[22px]'],
  ['4D', 'w-[21px]'], ['3V', 'w-[22px]'], ['', 'w-[20px]'], ['Mandant: 1 swp-Bau GmbH', 'w-[181px] pl-[3px] text-left'],
];

const StatusBar = () => (
  <div className="flex h-[17px] items-center border-t border-[#d5d5d5] bg-[#f0f0f0] text-center">
    {statusCells.map(([text, width], i) => (
      <div key={i} className={`h-4 border-r border-[#d8d8d8] leading-[18px] ${width}`}>
        {text}
      </div>
    ))}
  </div>
);

const taskIcons = [
  {
    name: 'Taskansicht',
    icon: (
      <Svg size={14}>
        <path d="M2 4h8v8H2zM2 1.500h8M2 14.500h8M13 1v4M13 8v7" stroke="#ddd" strokeWidth="1.300" />
        <path d="M12 6.500h2.500" stroke="#ddd" strokeWidth="2" />
      </Svg>
    ),
  },
  {
    name: 'Explorer',
    open: true,
    icon: (
      <Svg size={16}>
        <path d="M.5 2h6l1 2h8v10H.5z" fill="#fbd25f" />
        <path d="M.5 2h6l1 2H.5z" fill="#e3a92c" />
        <path d="M3 14V9h10v5h-3v-2.500H6V14z" fill="#3f8fd6" />
      </Svg>
    ),
  },
  {
    name: 'Dienste',
    open: true,
    icon: (
      <Svg size={17}>
        <circle cx="6.500" cy="6.500" r="4" stroke="#c8e0f2" strokeWidth="2.600" />
        <circle cx="6.500" cy="6.500" r="5.600" stroke="#c8e0f2" strokeWidth="1.500" strokeDasharray="2 1.500" />
        <circle cx="12.500" cy="12.500" r="2" stroke="#6ba7d6" strokeWidth="1.800" />
      </Svg>
    ),
  },
  {
    name: 'Verwaltung',
    icon: (
      <Svg size={17}>
        <rect x="1" y="3" width="13" height="12" fill="#d9d2c4" />
        <circle cx="9.500" cy="5.500" r="3.500" fill="#bdd2e4" stroke="#84a2bd" strokeWidth="1.600" />
        <path d="M2 8h4l1 7H2z" fill="#e6b030" />
        <circle cx="4" cy="8.500" r="2" fill="#3d73c0" />
      </Svg>
    ),
  },
  {
    name: 'Monitor',
    icon: (
      <Svg size={17}>
        <path d="M2 4 13.500 2 15.500 9l-9 3z" fill="#b9c6cf" stroke="#e6ecf0" />
        <path d="m4 8 2-2 2 2.500L10 5l3 3" stroke="#3c7fae" />
        <path d="m1 11 6-1 5 3-5 2z" fill="#d5dade" />
      </Svg>
    ),
  },
  {
    name: 'Chrome',
    icon: (
      <Svg size={17}>
        <circle cx="8" cy="8" r="7.500" fill="#4caf50" />
        <path d="M8 8 1.500 4.250A7.500 7.500 0 0 1 14.500 4.250z" fill="#e33b2e" />
        <path d="M8 8l6.500-3.750A7.500 7.500 0 0 1 8 15.500z" fill="#fccb2f" />
        <circle cx="8" cy="8" r="3.600" fill="#fff" />
        <circle cx="8" cy="8" r="2.700" fill="#3f7de0" />
      </Svg>
    ),
  },
  { name: 'DOCUframe', open: true, active: true, icon: <AppIcon size={16} /> },
  {
    name: 'Statistik',
    icon: (
      <Svg size={17}>
        <rect x="1" y="1" width="14" height="14" rx="2" fill="#fff" stroke="#e8a800" strokeWidth="2" />
        <path d="M5 12.500V10M8 12.500v-5M11.200 12.500v-9" stroke="#e8a800" strokeWidth="2.400" />
      </Svg>
    ),
  },
  {
    name: 'Server',
    open: true,
    icon: (
      <Svg size={18}>
        <path d="M1 .5h7v15H1z" fill="#3d94dc" />
        <path d="M2.500 3h4M2.500 5.500h4" stroke="#cfe6f8" />
        <rect x="5" y="9" width="11" height="6" rx="1" fill="#8ba9c0" stroke="#c2d3df" strokeWidth=".7" />
        <path d="M8.500 9V7.500h4V9" stroke="#c2d3df" />
      </Svg>
    ),
  },
  {
    name: 'Editor',
    open: true,
    icon: (
      <Svg size={17}>
        <path d="M5 1.500h9.500L12 15H1z" fill="#7cc0cc" />
        <path d="m14.500 1.500 1 9L12 15z" fill="#e8e0c8" />
        <path d="M6 3.500h6L9 12H3z" fill="#b5e0e6" />
      </Svg>
    ),
  },
  {
    name: 'Snipping',
    open: true,
    icon: (
      <Svg size={18}>
        <ellipse cx="8" cy="6" rx="7" ry="4.500" transform="rotate(-15 8 6)" fill="#f4f4f4" stroke="#d44545" strokeWidth="1.200" />
        <path d="m5 5 6 6M9 3 8 10" stroke="#888" />
        <circle cx="10" cy="13" r="1.700" stroke="#2b80c8" strokeWidth="1.300" />
        <circle cx="13.500" cy="11" r="1.700" stroke="#2b80c8" strokeWidth="1.300" />
      </Svg>
    ),
  },
];

const TaskBar = () => (
  <footer className="flex h-[29px] items-stretch bg-black text-white">
    <button className="flex w-[35px] items-center justify-center" aria-label="Start">
      <Svg size={12}>
        <path d="M0 0h7.300v7.300H0zM8.700 0H16v7.300H8.700zM0 8.700h7.300V16H0zM8.700 8.700H16V16H8.700z" fill="#fff" />
      </Svg>
    </button>
    <div className="flex w-[247px] items-center bg-[#f0f0f0] pl-2">
      <Svg size={13}>
        <circle cx="10" cy="6" r="5" stroke="#333" strokeWidth="1.300" />
        <path d="M6.300 9.700 1 15" stroke="#333" strokeWidth="1.300" />
      </Svg>
      <input
        aria-label="Suche"
        placeholder="Suchbegriff hier eingeben"
        className="w-full bg-transparent pl-[7px] text-[11px] text-[#444] outline-none placeholder:text-[#444]"
      />
    </div>
    <div className="flex w-[391px]">
      {taskIcons.map((t) => (
        <button
          key={t.name}
          aria-label={t.name}
          className={`flex flex-1 basis-0 flex-col items-center ${t.active ? 'bg-[#333333]' : 'px-[3px]'}`}
        >
          <span className="flex flex-1 items-center">{t.icon}</span>
          <span className={`h-0.5 w-full ${t.open ? 'bg-[#76b9ed]' : ''}`} />
        </button>
      ))}
    </div>
    <div className="flex flex-1 items-center justify-end gap-1">
      <Svg size={10} box={10}>
        <path d="m1 7 4-4 4 4" stroke="#eee" />
      </Svg>
      <Svg size={13}>
        <path d="M1 6h2.500L8 2.500v11L3.500 10H1z" stroke="#ddd" />
        <circle cx="12" cy="11" r="4" fill="#e03535" />
        <path d="m10.500 9.500 3 3m0-3-3 3" stroke="#fff" />
      </Svg>
      <Svg size={13}>
        <path d="M4 3h11v8H4zM9.500 11v3M6.500 14.500h6M1 1h4v4H1zM2.500 5v6" stroke="#ddd" />
      </Svg>
      <Svg size={13}>
        <path d="M1 3h9v11H1zM10 2h5v5M5 6a3 3 0 1 0 2 5" stroke="#ddd" />
        <circle cx="12" cy="12" r="3.700" fill="#f79a1c" />
      </Svg>
      <div className="w-[42px] text-center text-[8px] leading-[13px]">
        15:28
        <br />
        26.06.2025
      </div>
      <div className="mr-[3px] flex h-full w-[34px] items-center border-r border-[#555] pl-1.5">
        <Svg size={19} box={20}>
          <path d="M2 3h14v11H7l-3 3v-3H2z" fill="#fff" />
          <path d="M4 6h10M4 8.500h10M4 11h7" stroke="#000" />
          <circle cx="14.500" cy="13.500" r="5.300" fill="#3a3a3a" stroke="#777" strokeWidth=".6" />
          <text x="14.500" y="16.500" fontSize="8" textAnchor="middle" fill="#fff" fontFamily="Roboto, sans-serif">
            6
          </text>
        </Svg>
      </div>
    </div>
  </footer>
);

export default function App() {
  return (
    <div className="flex min-h-screen flex-col bg-[#efefef] font-[Roboto,'Open_Sans',sans-serif] text-[9px] leading-[11px] text-[#111]">
      <TitleBar />
      <MenuBar />
      <ToolBar />
      <FilterBar />
      <ArticleGrid />
      <main className="mt-1.5 flex flex-1 border-b border-t border-[#a8a8a8]">
        <div className="flex min-w-0 flex-1 flex-col border-l border-[#a8a8a8] pl-1">
          <div className="mb-px mr-[3px] mt-[5px] border border-[#b9b9b9] bg-white p-px">
            <div className="h-[17px] bg-[#228b22] pl-1.5 font-bold leading-[17px] text-white">
              Artikel&nbsp; -&nbsp; Holzweichfaserplatte 100 mm [VI-00115-Dämm]
            </div>
          </div>
          <Tabs />
          <div className="relative mb-0.5 mr-px flex-1 bg-white pt-[9px]">
            <MainSupplier />
            <h2 className="mt-[3px] h-[11px] pl-2 font-bold text-[#6d6d6d]">Zusatzlieferanten</h2>
            <SupplierGrid />
            <ExtraSupplier />
            <StockLevels />
            <Markers />
          </div>
        </div>
        <SideBar />
      </main>
      <WindowTabs />
      <StatusBar />
      <TaskBar />
    </div>
  );
}
